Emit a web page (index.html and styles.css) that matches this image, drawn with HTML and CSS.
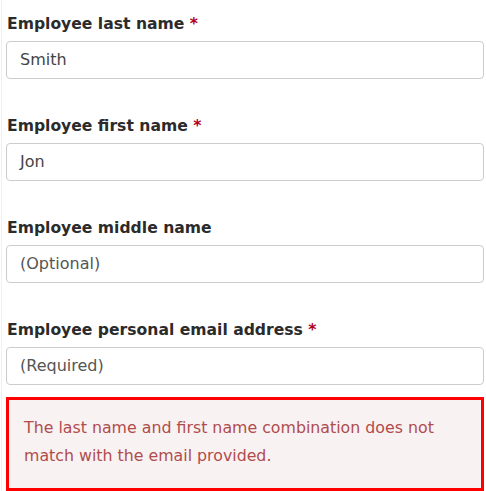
FILE: index.html
```html
<!DOCTYPE html>
<html lang="en">
<head>
<meta charset="utf-8">
<title>Employee form</title>
<link rel="stylesheet" href="styles.css">
</head>
<body>
<div class="page">
  <div class="field">
    <label class="label">Employee last name <span class="req">*</span></label>
    <div class="input">Smith</div>
  </div>
  <div class="field">
    <label class="label">Employee first name <span class="req">*</span></label>
    <div class="input">Jon</div>
  </div>
  <div class="field">
    <label class="label">Employee middle name</label>
    <div class="input placeholder">(Optional)</div>
  </div>
  <div class="field field-last">
    <label class="label">Employee personal email address <span class="req">*</span></label>
    <div class="input placeholder">(Required)</div>
  </div>
  <div class="error">The last name and first name combination does not match with the email provided.</div>
</div>
</body>
</html>
```
FILE: styles.css
```css
html, body {
  margin: 0;
  padding: 0;
  background: #ffffff;
}
body {
  font-family: "DejaVu Sans", Verdana, sans-serif;
  width: 486px;
  height: 491px;
  overflow: hidden;
}
.page {
  margin-left: 1px;
  border-left: 1px solid #f0f0f0;
  padding: 10px 2px 0 4px;
  display: flex;
  flex-direction: column;
}
.field {
  display: flex;
  flex-direction: column;
  margin-bottom: 33px;
}
.field-last {
  margin-bottom: 12px;
}
.label {
  display: block;
  font-weight: bold;
  font-size: 15.6px;
  line-height: 24px;
  color: #2b2b2b;
  padding: 2px 0 0 1px;
  margin-bottom: 5px;
}
.req {
  color: #b0001e;
}
.input {
  box-sizing: border-box;
  height: 38px;
  border: 1px solid #cccccc;
  border-radius: 4px;
  padding: 0 13px;
  font-size: 16px;
  line-height: 36px;
  color: #444444;
  background: #fff;
}
.placeholder {
  color: #555555;
}
.error {
  box-sizing: border-box;
  border: 3px solid #ff0000;
  background: #f9f2f2;
  color: #b04c4c;
  font-size: 15.8px;
  line-height: 28px;
  padding: 14px 16px 18px 15px;
  width: 478px;
}
```
